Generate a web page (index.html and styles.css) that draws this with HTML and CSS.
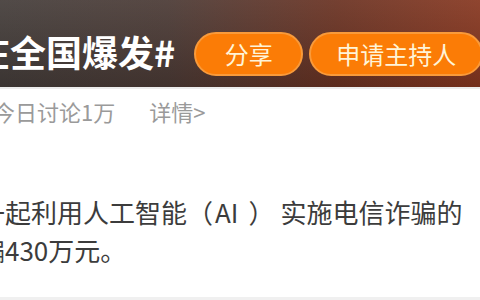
FILE: index.html
```html
<!DOCTYPE html>
<html lang="zh-CN">
<head>
<meta charset="utf-8">
<title>话题</title>
<link rel="stylesheet" href="styles.css">
</head>
<body>
<div class="page">
  <header class="topic-head">
    <h1 class="topic-title">在全国爆发#</h1>
    <a class="pill pill-share">分享</a>
    <a class="pill pill-host">申请主持人</a>
  </header>
  <div class="divider"></div>
  <div class="meta">
    <span class="meta-count">今日讨论1万</span>
    <span class="meta-detail">详情&gt;</span>
  </div>
  <div class="content">
    <p class="summary"><span class="line">一起利用人工智能（<span class="ai">AI</span><span class="paren">）</span>实施电信诈骗的</span><span class="line">骗430万元。</span></p>
  </div>
  <div class="bottom-strip"></div>
</div>
</body>
</html>
```
FILE: styles.css
```css
html, body {
  margin: 0;
  padding: 0;
}
body {
  width: 480px;
  height: 300px;
  overflow: hidden;
  background: #ffffff;
  font-family: "Noto Sans CJK SC", "Noto Sans", sans-serif;
}
.page {
  display: flex;
  flex-direction: column;
  width: 480px;
  height: 300px;
  overflow: hidden;
}
.topic-head {
  flex: 0 0 87px;
  box-sizing: border-box;
  padding-top: 20px;
  display: flex;
  align-items: center;
  overflow: hidden;
  white-space: nowrap;
  background:
    linear-gradient(to bottom, rgba(255,255,255,0.07), rgba(0,0,0,0.14)),
    linear-gradient(to right, #443d3a 0%, #4b3a35 35%, #6a3222 70%, #873720 100%);
}
.topic-title {
  margin: 0 0 6px -26px;
  font-size: 36px;
  line-height: 40px;
  font-weight: 700;
  color: #ffffff;
  flex: 0 0 auto;
}
.pill {
  flex: 0 0 auto;
  box-sizing: border-box;
  height: 44px;
  display: flex;
  align-items: center;
  justify-content: center;
  border-radius: 22px;
  background: #fb7c06;
  border: 2px solid #f99a3a;
  color: #fff4d8;
  font-size: 24px;
  line-height: 1;
  text-decoration: none;
}
.pill-share {
  margin-left: 19px;
  width: 109px;
}
.pill-host {
  margin-left: 6px;
  width: 174px;
}
.divider {
  flex: 0 0 2px;
  background: #ececec;
}
.meta {
  display: flex;
  align-items: center;
  margin-top: 10px;
  margin-left: -7px;
  height: 24px;
  font-size: 22px;
  line-height: 24px;
  color: #9a9a9a;
  white-space: nowrap;
}
.meta-detail {
  margin-left: 34px;
}
.content {
  flex: 1 1 auto;
  overflow: hidden;
}
.summary {
  margin: 70px 0 0 -21px;
  font-size: 26px;
  line-height: 38px;
  color: #3c3c3c;
  white-space: nowrap;
}
.line {
  display: block;
}
.ai {
  margin: 0 10px 0 2px;
}
.paren {
  margin-right: 6px;
}
.bottom-strip {
  flex: 0 0 3px;
  background: #f0f0f0;
}
```
